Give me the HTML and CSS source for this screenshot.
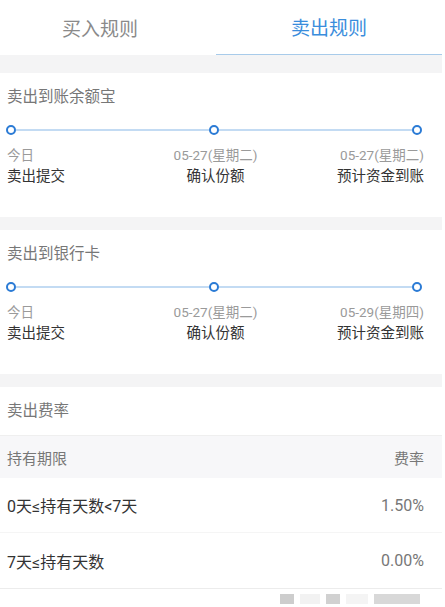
FILE: index.html
```html
<!DOCTYPE html>
<html lang="zh-CN">
<head>
<meta charset="utf-8">
<title>卖出规则</title>
<link rel="stylesheet" href="styles.css">
</head>
<body>
<div class="page">
  <div class="tabs">
    <div class="tab tab-left">买入规则</div>
    <div class="tab tab-active">卖出规则</div>
  </div>

  <div class="gap gap-first"></div>

  <section class="section">
    <div class="title">卖出到账余额宝</div>
    <div class="timeline">
      <span class="dot"></span><span class="line"></span><span class="dot"></span><span class="line"></span><span class="dot"></span>
    </div>
    <div class="labels">
      <div class="col left"><div class="date">今日</div><div class="step">卖出提交</div></div>
      <div class="col center"><div class="date">05-27(星期二)</div><div class="step">确认份额</div></div>
      <div class="col right"><div class="date">05-27(星期二)</div><div class="step">预计资金到账</div></div>
    </div>
  </section>

  <div class="gap"></div>

  <section class="section">
    <div class="title">卖出到银行卡</div>
    <div class="timeline">
      <span class="dot"></span><span class="line"></span><span class="dot"></span><span class="line"></span><span class="dot"></span>
    </div>
    <div class="labels">
      <div class="col left"><div class="date">今日</div><div class="step">卖出提交</div></div>
      <div class="col center"><div class="date">05-27(星期二)</div><div class="step">确认份额</div></div>
      <div class="col right"><div class="date">05-29(星期四)</div><div class="step">预计资金到账</div></div>
    </div>
  </section>

  <div class="gap"></div>

  <section class="fees">
    <div class="title fee-title">卖出费率</div>
    <div class="row head"><span>持有期限</span><span>费率</span></div>
    <div class="row item"><span>0天≤持有天数&lt;7天</span><span class="rate">1.50%</span></div>
    <div class="row item last"><span>7天≤持有天数</span><span class="rate">0.00%</span></div>
  </section>

  <div class="watermark">
    <span class="wm w1"></span><span class="wm w2"></span><span class="wm w3"></span><span class="wm w4"></span><span class="wm w5"></span>
  </div>
</div>
</body>
</html>
```

FILE: styles.css
```css
* { box-sizing: border-box; margin: 0; padding: 0; }
html, body { background: #ffffff; }
body {
  font-family: "Roboto", "Noto Sans CJK SC", "Noto Sans", sans-serif;
  color: #333;
}
.page {
  width: 442px;
  background: #fff;
}
.tabs {
  display: grid;
  grid-template-columns: 216px 1fr;
  height: 55px;
}
.tab {
  display: flex;
  align-items: center;
  justify-content: center;
  font-size: 19px;
  color: #8a8a8a;
  padding-bottom: 1px;
}
.tab-left { padding-right: 16px; }
.tab-active {
  color: #3a8ddc;
  border-bottom: 1.5px solid #a8cbea;
}
.gap {
  height: 13px;
  background: #f4f4f5;
}
.gap-first { height: 18px; }

.section {
  padding: 13px 18px 30px 7px;
}
.title {
  font-size: 15.5px;
  line-height: 22px;
  color: #777;
}
.timeline {
  display: flex;
  align-items: center;
  height: 10px;
  margin-top: 17px;
  margin-right: 2px;
  margin-left: -1px;
}
.dot {
  width: 10px;
  height: 10px;
  border-radius: 50%;
  border: 2.5px solid #2b7bd5;
  background: #fff;
  flex: none;
}
.line {
  flex: 1;
  height: 2.5px;
  background: #c3dbf3;
}
.labels {
  display: grid;
  grid-template-columns: 1fr 1fr 1fr;
  margin-top: 10px;
}
.left { text-align: left; }
.center { text-align: center; }
.right { text-align: right; }
.date {
  font-size: 13.5px;
  line-height: 20px;
  color: #9a9a9a;
  white-space: nowrap;
}
.step {
  font-size: 14.5px;
  line-height: 20px;
  color: #333;
  margin-top: 2px;
  white-space: nowrap;
}

.fees {
  padding-top: 13px;
}
.fee-title {
  padding: 0 7px;
  margin-bottom: 13px;
}
.row {
  display: flex;
  justify-content: space-between;
  align-items: center;
  padding: 0 18px 0 7px;
}
.head {
  height: 43px;
  background: #f7f7f9;
  border-top: 1px solid #efefef;
  font-size: 15px;
  color: #777;
}
.item {
  height: 55px;
  font-size: 16px;
  color: #333;
  border-bottom: 1px solid #f5f5f5;
}
.item.last {
  height: 56px;
  border-bottom: 1px solid #ececec;
}
.rate { color: #777; }

.watermark {
  height: 20px;
  display: flex;
  align-items: center;
  justify-content: flex-end;
  gap: 6px;
  padding-right: 22px;
}
.wm {
  height: 10px;
  opacity: 0.7;
}
.w1 { width: 14px; background: #b8b8b8; }
.w2 { width: 20px; background: #ececec; }
.w3 { width: 14px; background: #bdbdbd; }
.w4 { width: 22px; background: #f0f0f0; }
.w5 { width: 46px; background: #c8c8c8; }
```
